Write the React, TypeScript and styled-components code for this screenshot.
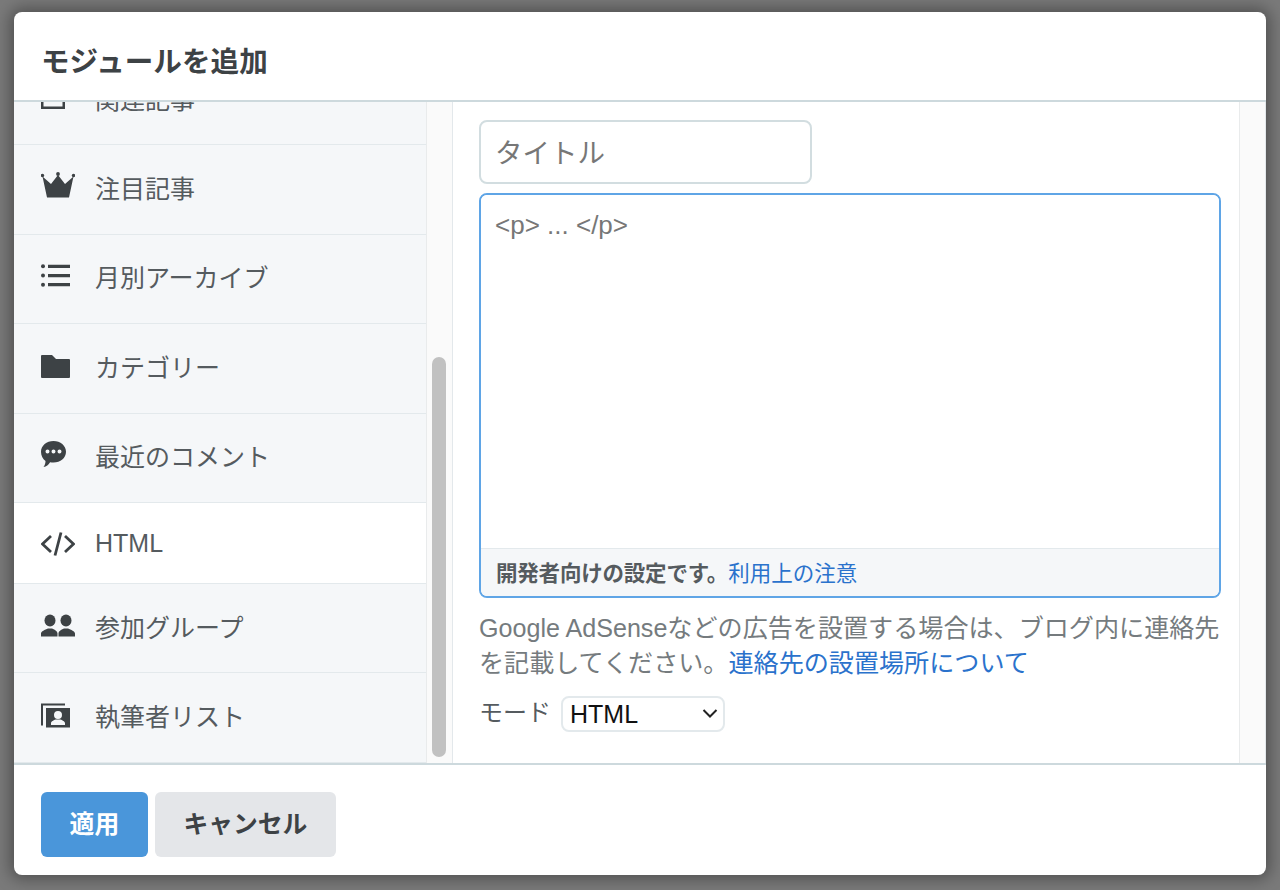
import { useEffect, useRef } from 'react';
import styled, { createGlobalStyle } from 'styled-components';

const colors = {
  text: '#555b5f',
  strong: '#3d4245',
  muted: '#757b7e',
  link: '#2a72cc',
  blue: '#4a96da',
  focus: '#5fa5e6',
  line: '#cdd9dd',
  rowLine: '#e3e9ec',
  rowBg: '#f5f7f9',
  white: '#ffffff'
};

const GlobalStyle = createGlobalStyle`
  html, body {
    margin: 0;
    height: 100%;
    overflow: hidden;
  }
  body {
    font-family: "Liberation Sans", "Noto Sans CJK JP", sans-serif;
    color: ${colors.text};
  }
`;

const Overlay = styled.div`
  box-sizing: border-box;
  height: 890px;
  padding: 12px 14px 15px;
  background: #7a7a7a;
`;

const Modal = styled.div`
  height: 100%;
  display: flex;
  flex-direction: column;
  background: ${colors.white};
  border-radius: 8px;
  overflow: hidden;
  box-shadow: 0 0 16px 4px rgba(0, 0, 0, 0.35);
`;

const Header = styled.header`
  box-sizing: border-box;
  flex: none;
  height: 90px;
  padding: 6px 27px 0;
  display: flex;
  align-items: center;
  border-bottom: 2px solid ${colors.line};
`;

const Title = styled.h1`
  margin: 0;
  font-size: 28.6px;
  font-weight: 700;
  color: ${colors.strong};
`;

const Body = styled.div`
  flex: 1;
  min-height: 0;
  display: flex;
`;

const ModuleList = styled.ul`
  box-sizing: border-box;
  flex: none;
  width: 412px;
  margin: 0;
  padding: 374px 0 10px;
  list-style: none;
  overflow: hidden;
`;

const ModuleRow = styled.li<{ $active?: boolean }>`
  box-sizing: border-box;
  height: ${(p) => (p.$active ? '81px' : '89.4px')};
  padding: ${(p) => (p.$active ? '2px 0 0 27px' : '0 0 2px 27px')};
  display: flex;
  align-items: center;
  gap: 20px;
  font-size: 25px;
  background: ${(p) => (p.$active ? colors.white : colors.rowBg)};
  border-bottom: 1px solid ${colors.rowLine};
`;

const RowLabel = styled.span<{ $active?: boolean }>`
  padding-bottom: ${(p) => (p.$active ? '0' : '3px')};
`;

const Icon = styled.svg`
  flex: none;
  width: 34px;
  height: 34px;
  fill: ${colors.strong};
`;

const ScrollTrack = styled.div`
  box-sizing: border-box;
  flex: none;
  width: 27px;
  padding: 0 5px;
  background: #fafafa;
  border-left: 1px solid #e9ebec;
  border-right: 1px solid #e3e8eb;
  overflow: hidden;
`;

const ScrollThumb = styled.div`
  width: 14px;
  height: 400px;
  margin-top: 255px;
  background: #c1c1c1;
  border-radius: 7px;
`;

const Panel = styled.div`
  flex: 1;
  min-width: 0;
  padding: 18px 18px 0 26px;
  overflow: hidden;
`;

const TitleInput = styled.input`
  box-sizing: border-box;
  display: block;
  width: 333px;
  height: 64px;
  padding: 4px 14px 0;
  font: inherit;
  font-size: 27.5px;
  background: ${colors.white};
  border: 2px solid #d2dde0;
  border-radius: 8px;
  outline: none;
  &::placeholder {
    color: #777;
  }
`;

const EditorBox = styled.div`
  box-sizing: border-box;
  height: 405px;
  margin-top: 9px;
  display: flex;
  flex-direction: column;
  border: 2px solid ${colors.focus};
  border-radius: 8px;
  overflow: hidden;
`;

const Editor = styled.textarea`
  flex: 1;
  min-height: 0;
  padding: 15px 14px;
  font-family: inherit;
  font-size: 26px;
  line-height: 30px;
  border: none;
  outline: none;
  resize: none;
  &::placeholder {
    color: #777;
  }
`;

const EditorNote = styled.div`
  flex: none;
  box-sizing: border-box;
  height: 48px;
  padding: 0 15px 2px;
  display: flex;
  align-items: center;
  font-size: 21.5px;
  background: ${colors.rowBg};
  border-top: 1px solid ${colors.rowLine};
`;

const NoteLabel = styled.strong`
  font-weight: 700;
  letter-spacing: -0.2px;
`;

const Link = styled.a`
  color: ${colors.link};
  text-decoration: none;
`;

const HelpText = styled.p`
  margin: 13px 0 0;
  font-size: 25.1px;
  line-height: 35px;
  color: ${colors.muted};
`;

const ModeRow = styled.div`
  margin-top: 12px;
  display: flex;
  align-items: center;
  gap: 10px;
  font-size: 24px;
`;

const ModeLabel = styled.span`
  padding-bottom: 6px;
`;

const SelectWrap = styled.div`
  position: relative;
  width: 164px;
  height: 36px;
`;

const Select = styled.select`
  box-sizing: border-box;
  width: 100%;
  height: 100%;
  padding: 0 0 0 7px;
  appearance: none;
  font-family: inherit;
  font-size: 25px;
  color: #111;
  background: ${colors.white};
  border: 2px solid #e3e9ec;
  border-radius: 8px;
  outline: none;
`;

const Chevron = styled.svg`
  position: absolute;
  top: 12px;
  right: 7px;
  width: 16px;
  height: 11px;
  fill: none;
  stroke: #222;
  stroke-width: 2;
  pointer-events: none;
`;

const Footer = styled.footer`
  box-sizing: border-box;
  flex: none;
  height: 112px;
  padding: 27px 27px 0;
  display: flex;
  align-items: flex-start;
  gap: 7px;
  border-top: 2px solid ${colors.line};
`;

const Button = styled.button<{ $primary?: boolean }>`
  height: 65px;
  padding: 0 28.6px 5px;
  font-family: inherit;
  font-size: 24.8px;
  font-weight: 700;
  color: ${(p) => (p.$primary ? colors.white : colors.strong)};
  background: ${(p) => (p.$primary ? colors.blue : '#e4e6e9')};
  border: none;
  border-radius: 6px;
`;

const modules = [
  {
    label: '関連記事',
    icon: <path d="M0 6h24v21H0zM2.500 12v12.500h19V12z" fillRule="evenodd" />
  },
  {
    label: '注目記事',
    icon: (
      <>
        <circle cx="1.500" cy="3.500" r="1.700" />
        <circle cx="17" cy="2" r="1.900" />
        <circle cx="32.500" cy="3.500" r="1.700" />
        <path d="M1.500 4.500 10 12 17 3l7 9 8.500-7.500L28 25.500H6z" />
      </>
    )
  },
  {
    label: '月別アーカイブ',
    icon: (
      <>
        <circle cx="2" cy="5.300" r="2" />
        <circle cx="2" cy="14.500" r="2" />
        <circle cx="2" cy="23.700" r="2" />
        <path d="M7 3.800h22V7H7zM7 13h22v3.200H7zM7 22.100h22v3.200H7z" />
      </>
    )
  },
  {
    label: 'カテゴリー',
    icon: <path d="M0 6a1 1 0 0 1 1-1h10l4 4h13a1 1 0 0 1 1 1v17a1 1 0 0 1-1 1H1a1 1 0 0 1-1-1z" />
  },
  {
    label: '最近のコメント',
    icon: (
      <path
        fillRule="evenodd"
        d="M12.500 1C19.400 1 25 5.600 25 11.800s-5.600 10.800-12.500 10.800c-1.200 0-2.300-.1-3.400-.4C7.600 24.800 5.400 26.500 2.500 27c1.300-1.600 2-3.600 2-6C1.700 19 0 15.700 0 11.800 0 5.600 5.600 1 12.500 1zM6.500 9.500a2 2 0 1 0 0 4 2 2 0 0 0 0-4zm6 0a2 2 0 1 0 0 4 2 2 0 0 0 0-4zm6 0a2 2 0 1 0 0 4 2 2 0 0 0 0-4z"
      />
    )
  },
  {
    label: 'HTML',
    active: true,
    icon: (
      <path
        d="M10 9 1.500 17 10 25M24 9l8.500 8L24 25M20 5.500 14 28.500"
        fill="none"
        stroke="#3d4245"
        strokeWidth="2.800"
      />
    )
  },
  {
    label: '参加グループ',
    icon: (
      <>
        <ellipse cx="9" cy="10.500" rx="5.500" ry="6" />
        <ellipse cx="25" cy="10.500" rx="5.500" ry="6" />
        <path d="M0 26.500v-3c0-2.500 4-3.500 7-5h4c3 1.500 5.500 2.500 5.500 5v3zM17.500 26.500v-3c0-2.500 2.500-3.500 5.500-5h4c3 1.500 7 2.500 7 5v3z" />
      </>
    )
  },
  {
    label: '執筆者リスト',
    icon: (
      <path
        fillRule="evenodd"
        d="M0 3.500h24v2H2v20H0zM5 8h24v19.500H5zM17 11a4 4 0 1 0 0 8 4 4 0 0 0 0-8zm-7 14h14v-2c0-1.500-3-3-4.500-3.500h-5C13 20 10 21.500 10 23z"
      />
    )
  }
];

export default function App() {
  const listRef = useRef<HTMLUListElement>(null);

  // la lista viene ya desplazada casi hasta el final
  useEffect(() => {
    if (listRef.current) listRef.current.scrollTop = 420;
  }, []);

  return (
    <>
      <GlobalStyle />
      <Overlay>
        <Modal>
          <Header>
            <Title>モジュールを追加</Title>
          </Header>
          <Body>
            <ModuleList ref={listRef}>
              {modules.map((m) => (
                <ModuleRow key={m.label} $active={m.active}>
                  <Icon viewBox="0 0 34 34">{m.icon}</Icon>
                  <RowLabel $active={m.active}>{m.label}</RowLabel>
                </ModuleRow>
              ))}
            </ModuleList>
            <ScrollTrack>
              <ScrollThumb />
            </ScrollTrack>
            <Panel>
              <TitleInput placeholder="タイトル" />
              <EditorBox>
                <Editor placeholder="<p> ... </p>" />
                <EditorNote>
                  <NoteLabel>開発者向けの設定です。</NoteLabel>
                  <Link href="#">利用上の注意</Link>
                </EditorNote>
              </EditorBox>
              <HelpText>
                Google AdSenseなどの広告を設置する場合は、ブログ内に連絡先を記載してください。
                <Link href="#">連絡先の設置場所について</Link>
              </HelpText>
              <ModeRow>
                <ModeLabel>モード</ModeLabel>
                <SelectWrap>
                  <Select defaultValue="HTML">
                    <option>HTML</option>
                  </Select>
                  <Chevron viewBox="0 0 16 11">
                    <path d="M1.500 2 8 8.500 14.500 2" />
                  </Chevron>
                </SelectWrap>
              </ModeRow>
            </Panel>
            <ScrollTrack />
          </Body>
          <Footer>
            <Button $primary>適用</Button>
            <Button>キャンセル</Button>
          </Footer>
        </Modal>
      </Overlay>
    </>
  );
}
